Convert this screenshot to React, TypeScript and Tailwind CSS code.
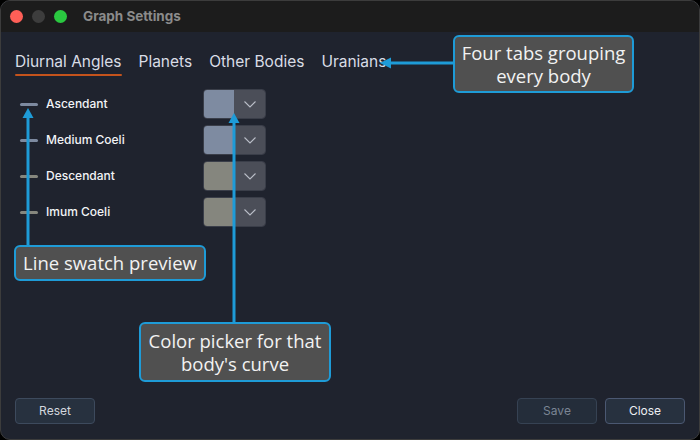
import React from "react";

const rows = [
  { name: "Ascendant", line: "#7d8aa0", swatch: "#7e8ba1" },
  { name: "Medium Coeli", line: "#7d8aa0", swatch: "#7e8ba1" },
  { name: "Descendant", line: "#86877e", swatch: "#85867e" },
  { name: "Imum Coeli", line: "#86877e", swatch: "#85867e" },
];

function Chevron() {
  return (
    <svg width="12" height="7" viewBox="0 0 12 7" fill="none">
      <path d="M0.5 0.5 L6 6 L11.5 0.5" stroke="#b8bcc6" strokeWidth="1.1" />
    </svg>
  );
}

export default function App() {
  return (
    <div className="relative w-[700px] h-[440px] bg-black overflow-hidden" style={{ fontFamily: "Inter, 'Liberation Sans', sans-serif" }}>
      <div className="w-full h-full rounded-[10px] border border-[#3c3c3c] bg-[#1f232e] overflow-hidden flex flex-col">
        {/* title bar */}
        <div className="h-[31px] bg-[#1c1c1c] flex items-center pl-[9px] shrink-0">
          <div className="w-[13px] h-[13px] rounded-full bg-[#fe5f57]" />
          <div className="w-[13px] h-[13px] rounded-full bg-[#3d3d3d] ml-[9px]" />
          <div className="w-[13px] h-[13px] rounded-full bg-[#2ac840] ml-[9px]" />
          <div className="ml-[16px] text-[13.5px] font-bold text-[#8b8b8b]">Graph Settings</div>
        </div>
        {/* content */}
        <div className="flex-1 flex flex-col px-[14px]">
          <div className="flex gap-[17px] pt-[20px] text-[15.5px] text-[#d9dde6]">
            <div className="flex flex-col">
              <span className="leading-[20px]">Diurnal Angles</span>
              <div className="h-[2px] bg-[#c4531c] mt-[2px] rounded-full" />
            </div>
            <span className="leading-[20px]">Planets</span>
            <span className="leading-[20px]">Other Bodies</span>
            <span className="leading-[20px]">Uranians</span>
          </div>
          <div className="flex flex-col gap-[6px] mt-[13px]">
            {rows.map((r) => (
              <div key={r.name} className="flex items-center h-[30px]">
                <div className="w-[18px] h-[3px] ml-[5px] rounded-full" style={{ background: r.line }} />
                <div className="w-[165px] pl-[8px] text-[12px] font-medium text-[#f2f3f6]">{r.name}</div>
                <div className="flex h-[30px] w-[63px] rounded-[4px] border border-[#3a3e49] overflow-hidden">
                  <div className="w-[30px] h-full" style={{ background: r.swatch }} />
                  <div className="flex-1 bg-[#4b4e58] flex items-center justify-center">
                    <Chevron />
                  </div>
                </div>
              </div>
            ))}
          </div>
          <div className="flex-1" />
          <div className="flex items-center pb-[15px] text-[12px]">
            <button className="w-[80px] h-[26px] rounded-[4px] border border-[#3d4a5d] bg-[#27313f] text-[#d3d7de]">Reset</button>
            <div className="flex-1" />
            <button className="w-[80px] h-[26px] rounded-[4px] border border-[#364253] bg-[#242d3a] text-[#7b8594]">Save</button>
            <button className="w-[80px] h-[26px] ml-[8px] rounded-[4px] border border-[#4b5872] bg-[#27313f] text-[#eceef2]">Close</button>
          </div>
        </div>
      </div>

      {/* annotation arrows */}
      <svg className="absolute inset-0 pointer-events-none" width="700" height="440">
        <line x1="454" y1="63" x2="388" y2="63" stroke="#1e9bd7" strokeWidth="3" />
        <polygon points="380,63 391,57.5 391,68.5" fill="#1e9bd7" />
        <line x1="28" y1="246" x2="28" y2="116" stroke="#1e9bd7" strokeWidth="3" />
        <polygon points="28,108 22.5,118 33.5,118" fill="#1e9bd7" />
        <line x1="234" y1="323" x2="234" y2="121" stroke="#1e9bd7" strokeWidth="3" />
        <polygon points="234,113 228.5,123 239.5,123" fill="#1e9bd7" />
      </svg>

      <div
        className="absolute left-[453px] top-[35px] w-[181px] h-[58px] rounded-[6px] border-2 border-[#1e9bd7] bg-[#505050] flex flex-col items-center justify-center text-center text-[18.5px] leading-[23px] text-[#f2f2f2]"
        style={{ fontFamily: "'Open Sans', sans-serif" }}
      >
        <span>Four tabs grouping</span>
        <span>every body</span>
      </div>
      <div
        className="absolute left-[14px] top-[245px] w-[192px] h-[36px] rounded-[6px] border-2 border-[#1e9bd7] bg-[#505050] flex items-center justify-center text-center text-[18.5px] leading-[22px] text-[#f2f2f2]"
        style={{ fontFamily: "'Open Sans', sans-serif" }}
      >
        Line swatch preview
      </div>
      <div
        className="absolute left-[139px] top-[322px] w-[192px] h-[60px] rounded-[6px] border-2 border-[#1e9bd7] bg-[#505050] flex flex-col items-center justify-center text-center text-[18.5px] leading-[23px] text-[#f2f2f2]"
        style={{ fontFamily: "'Open Sans', sans-serif" }}
      >
        <span>Color picker for that</span>
        <span>body's curve</span>
      </div>
    </div>
  );
}
